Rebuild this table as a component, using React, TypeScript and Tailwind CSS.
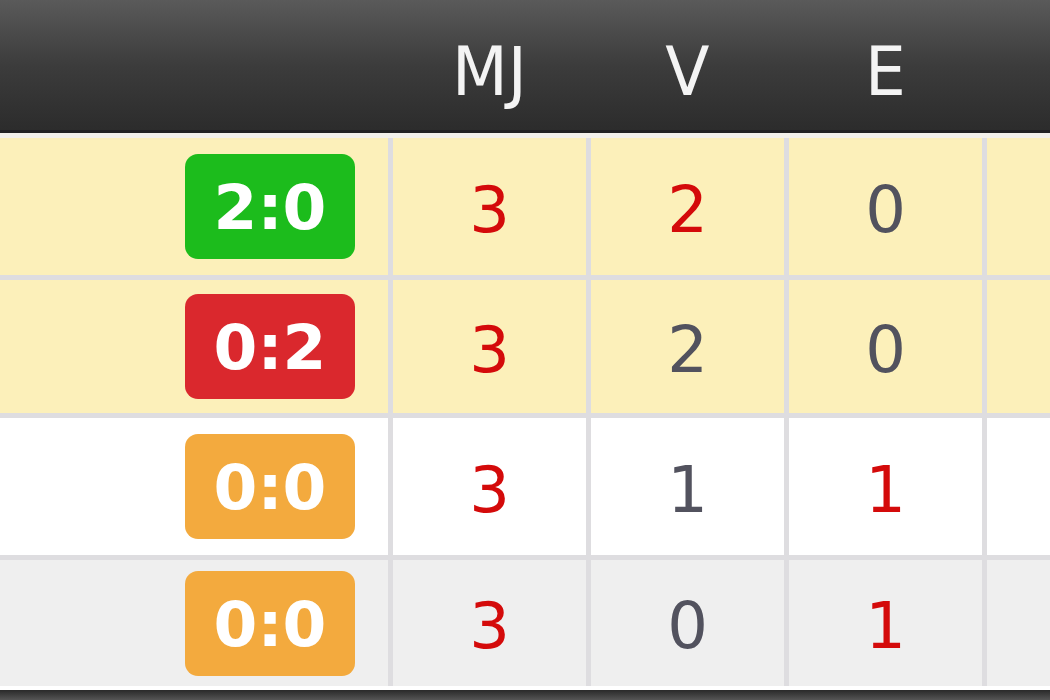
type Cell = { v: string; red?: boolean };

type Row = {
  bg: string;
  h: string;
  score: string;
  badge: string;
  sep: boolean;
  cells: Cell[];
};

const rows: Row[] = [
  {
    bg: "bg-[#fcf0ba]",
    h: "h-[142px]",
    score: "2:0",
    badge: "bg-[#1cbc1c]",
    sep: true,
    cells: [{ v: "3", red: true }, { v: "2", red: true }, { v: "0" }],
  },
  {
    bg: "bg-[#fcf0ba]",
    h: "h-[138px]",
    score: "0:2",
    badge: "bg-[#da282d]",
    sep: true,
    cells: [{ v: "3", red: true }, { v: "2" }, { v: "0" }],
  },
  {
    bg: "bg-white",
    h: "h-[142px]",
    score: "0:0",
    badge: "bg-[#f3aa3e]",
    sep: true,
    cells: [{ v: "3", red: true }, { v: "1" }, { v: "1", red: true }],
  },
  {
    bg: "bg-[#efefef]",
    h: "h-[126px]",
    score: "0:0",
    badge: "bg-[#f3aa3e]",
    sep: false,
    cells: [{ v: "3", red: true }, { v: "0" }, { v: "1", red: true }],
  },
];

function TableRow({ row }: { row: Row }) {
  return (
    <div className={`flex ${row.h} ${row.bg} ${row.sep ? "border-b-[5px] border-[#dedde0]" : ""}`}>
      <div className="w-[393px] shrink-0 flex items-center justify-end pr-[33px] border-r-[5px] border-[#dedde0]">
        <div
          className={`w-[170px] h-[105px] rounded-[13px] ${row.badge} flex items-center justify-center text-white font-bold text-[63px] leading-none pt-[2px]`}
        >
          {row.score}
        </div>
      </div>
      {row.cells.map((c, i) => (
        <div
          key={i}
          className={`w-[198px] shrink-0 flex items-center justify-center border-r-[5px] border-[#dedde0] text-[64px] leading-none pt-[6px] ${
            c.red ? "text-[#d40a0a]" : "text-[#52525e]"
          }`}
        >
          {c.v}
        </div>
      ))}
      <div className="flex-1" />
    </div>
  );
}

export default function App() {
  return (
    <div className="w-[1050px] h-[700px] overflow-hidden bg-white font-['DejaVu_Sans',sans-serif]">
      <div className="h-[133px] flex bg-gradient-to-b from-[#5a5a5a] via-[#3c3c3c] to-[#2c2c2c] border-b-[3px] border-[#222]">
        <div className="w-[393px] shrink-0" />
        {["MJ", "V", "E"].map((t) => (
          <div
            key={t}
            className="w-[198px] shrink-0 pr-[5px] flex items-center justify-center pt-[14px] text-[#f4f4f4] text-[68px] leading-none"
          >
            <span className="inline-block scale-x-[0.95]">{t}</span>
          </div>
        ))}
      </div>
      <div className="h-[5px] bg-[#f3f1ea]" />
      {rows.map((r, i) => (
        <TableRow key={i} row={r} />
      ))}
      <div className="h-[4px] bg-white" />
      <div className="h-[10px] bg-gradient-to-b from-[#2a2a2a] to-[#555]" />
    </div>
  );
}
